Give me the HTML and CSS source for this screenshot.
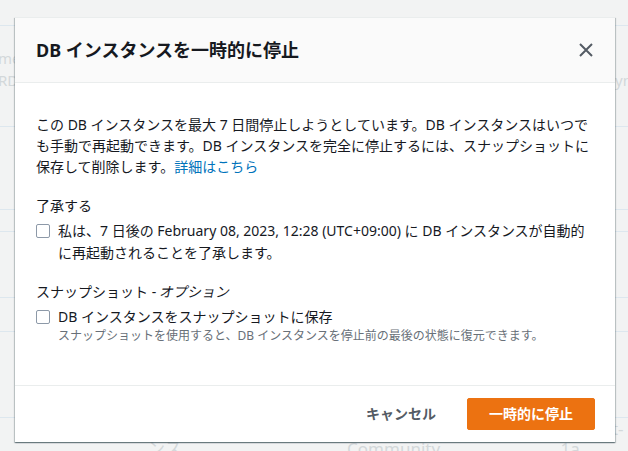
FILE: index.html
```html
<!DOCTYPE html>
<html lang="ja">
<head>
<meta charset="utf-8">
<title>DB インスタンスを一時的に停止</title>
<link rel="stylesheet" href="styles.css">
</head>
<body>
<div class="page">
  <div class="bg">
    <div class="bg-row h26"></div>
    <div class="bg-row h101">
      <div class="bg-cells"><span class="bg-text left1">me</span><span class="bg-text right1"></span></div>
      <div class="bg-cells"><span class="bg-text left1">RD</span><span class="bg-text right1">yn</span></div>
    </div>
    <div class="bg-row h83"></div>
    <div class="bg-row h22"></div>
    <div class="bg-row h66"></div>
    <div class="bg-row h34"></div>
    <div class="bg-row h86"></div>
    <div class="bg-row last">
      <span class="bg-col c1">インスタンス</span>
      <span class="bg-col c2">MySQL Community</span>
      <span class="bg-col c3">us-east-1a</span>
    </div>
  </div>

  <div class="modal" role="dialog">
    <header class="modal-header">
      <h2 class="modal-title">DB インスタンスを一時的に停止</h2>
      <button class="close-btn" aria-label="閉じる">
        <svg width="16" height="16" viewBox="0 0 16 16" aria-hidden="true"><path d="M2 2 L14 14 M14 2 L2 14" stroke="#545b64" stroke-width="2" fill="none"/></svg>
      </button>
    </header>
    <div class="modal-body">
      <p class="intro">この DB インスタンスを最大 7 日間停止しようとしています。DB インスタンスはいつでも手動で再起動できます。DB インスタンスを完全に停止するには、スナップショットに保存して削除します。<a class="link" href="#">詳細はこちら</a></p>

      <div class="field field-ack">
        <div class="field-label">了承する</div>
        <label class="check">
          <span class="box"></span>
          <span class="check-text">私は、7 日後の February 08, 2023, 12:28 (UTC+09:00) に DB インスタンスが自動的に再起動されることを了承します。</span>
        </label>
      </div>

      <div class="field field-snap">
        <div class="field-label">スナップショット - <span class="opt">オプション</span></div>
        <label class="check">
          <span class="box"></span>
          <span class="check-text">DB インスタンスをスナップショットに保存
            <span class="desc">スナップショットを使用すると、DB インスタンスを停止前の最後の状態に復元できます。</span>
          </span>
        </label>
      </div>
    </div>
    <footer class="modal-footer">
      <button class="btn btn-link">キャンセル</button>
      <button class="btn btn-primary">一時的に停止</button>
    </footer>
  </div>
</div>
</body>
</html>
```

FILE: styles.css
```css
* { box-sizing: border-box; }

html, body {
  margin: 0;
  padding: 0;
}

body {
  font-family: "Noto Sans", "Noto Sans CJK JP", sans-serif;
  color: #16191f;
  background: #f2f3f3;
}

.page {
  position: relative;
  width: 628px;
  height: 451px;
  overflow: hidden;
  background: #f2f3f3;
}

/* faded page content behind the dialog */
.bg {
  display: flex;
  flex-direction: column;
  height: 100%;
}

.bg-row {
  border-bottom: 1px solid #dde7ee;
  flex: none;
  display: flex;
}

.h26 { height: 26px; }
.h101 { height: 101px; flex-direction: column; padding-top: 22px; gap: 2px; }
.h83 { height: 83px; }
.h22 { height: 22px; }
.h66 { height: 66px; }
.h34 { height: 34px; }
.h86 { height: 86px; }
.last { flex: 1; border-bottom: 0; position: relative; }

.bg-cells {
  display: flex;
  justify-content: space-between;
  height: 20px;
}

.bg-text {
  font-size: 15px;
  color: #d3d8da;
  line-height: 20px;
}

.left1 { margin-left: -2px; }
.right1 { margin-right: -4px; }

.bg-col {
  font-size: 17px;
  color: #d3d8da;
  line-height: 20px;
  padding-top: 1px;
}
.c1 { margin-left: 148px; }
.c2 { margin-left: 116px; }
.c3 { margin-left: 88px; }

/* dialog */
.modal {
  position: absolute;
  left: 15px;
  top: 17px;
  width: 600px;
  height: 425px;
  background: #ffffff;
  display: flex;
  flex-direction: column;
  box-shadow: 0 1px 1px 0 rgba(0, 28, 36, 0.35), 1px 1px 1px 0 rgba(0, 28, 36, 0.18), -1px 1px 1px 0 rgba(0, 28, 36, 0.18);
}

.modal-header {
  height: 66px;
  flex: none;
  display: flex;
  align-items: center;
  justify-content: space-between;
  padding: 0 21px 0 21px;
  background: #fafafa;
  border-bottom: 1px solid #eaeded;
  border-top: 1px solid #eaeded;
}

.modal-title {
  margin: 0;
  font-size: 18px;
  font-weight: 700;
  line-height: 22px;
  color: #16191f;
}

.close-btn {
  border: 0;
  background: none;
  padding: 0;
  width: 16px;
  height: 16px;
  display: flex;
  cursor: pointer;
}

.modal-body {
  flex: 1;
  padding: 31px 20px 0 21px;
  font-size: 14px;
}

.intro {
  margin: 0;
  line-height: 21px;
}

.link {
  color: #0073bb;
  text-decoration: none;
}

.field-ack { margin-top: 18px; }
.field-snap { margin-top: 17px; }

.field-label {
  line-height: 22px;
  margin-bottom: 3px;
}

.opt {
  display: inline-block;
  transform: skewX(-12deg);
}

.check {
  display: flex;
  gap: 8px;
  align-items: flex-start;
  line-height: 22px;
}

.box {
  flex: none;
  width: 14px;
  height: 14px;
  margin-top: 4px;
  border: 1px solid #8d99a8;
  border-radius: 2px;
  background: #fff;
}

.check-text {
  display: block;
}

.desc {
  display: block;
  font-size: 12px;
  line-height: 16px;
  color: #687078;
}

.modal-footer {
  flex: none;
  display: flex;
  justify-content: flex-end;
  align-items: center;
  gap: 10px;
  padding: 12px 20px 12px 20px;
  border-top: 1px solid #eaeded;
}

.btn {
  font-family: inherit;
  font-size: 14px;
  font-weight: 700;
  line-height: 22px;
  height: 32px;
  padding: 4px 20px;
  border-radius: 2px;
  border: 1px solid transparent;
  cursor: pointer;
}

.btn-link {
  background: transparent;
  color: #545b64;
}

.btn-primary {
  background: #ec7211;
  border-color: #ec7211;
  color: #ffffff;
  padding: 4px 21px;
}
```
